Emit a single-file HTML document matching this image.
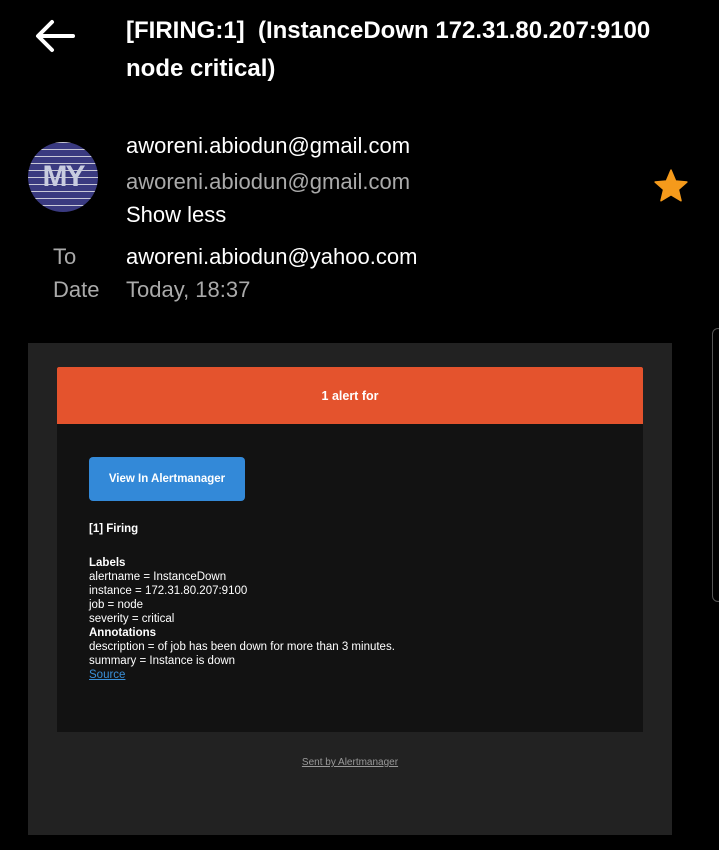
<!DOCTYPE html>
<html><head><meta charset="utf-8"><style>
body{margin:0;width:719px;height:850px;background:#000;position:relative;overflow:hidden;font-family:"Liberation Sans",sans-serif;color:#fff}
.a{position:absolute}
.t{font-size:24px;font-weight:bold;letter-spacing:0px;line-height:38px}
.h{font-size:22px;letter-spacing:0px;white-space:nowrap}
.s{font-size:11.5px;line-height:14px}
</style></head><body>
<svg class="a" style="left:34px;top:18px" width="42" height="36" viewBox="0 0 42 36"><path d="M39 18H5M18 4L4 18l14 14" stroke="#fff" stroke-width="4" fill="none" stroke-linecap="round" stroke-linejoin="round"/></svg>
<div class="a t" style="left:126px;top:12px;width:545px">[FIRING:1]&nbsp; (InstanceDown 172.31.80.207:9100 node critical)</div>
<div class="a" style="left:28px;top:142px;width:70px;height:70px;border-radius:50%;background:repeating-linear-gradient(0deg,#3a3a80 0 6px,#c8c8d8 6px 7px),#3a3a80;overflow:hidden"><div style="position:absolute;top:18px;left:0;width:70px;text-align:center;font-size:30px;font-weight:bold;color:#c8cce0;letter-spacing:-2px">MY</div></div>
<div class="a h" style="left:126px;top:133px">aworeni.abiodun@gmail.com</div>
<div class="a h" style="left:126px;top:169px;color:#aaa">aworeni.abiodun@gmail.com</div>
<div class="a h" style="left:126px;top:202px">Show less</div>
<svg class="a" style="left:651px;top:167px" width="40" height="38" viewBox="0 0 24 24"><path d="M12 2l2.9 6.9 7.1.6-5.4 4.7 1.7 7.1L12 17.5 5.7 21.3l1.7-7.1L2 9.5l7.1-.6z" fill="#f59a1b" stroke="#f59a1b" stroke-linejoin="round"/></svg>
<div class="a h" style="left:53px;top:244px;color:#aaa">To</div>
<div class="a h" style="left:126px;top:244px">aworeni.abiodun@yahoo.com</div>
<div class="a h" style="left:53px;top:277px;color:#aaa">Date</div>
<div class="a h" style="left:126px;top:277px;color:#aaa">Today, 18:37</div>
<div class="a" style="left:712px;top:328px;width:10px;height:272px;border:1px solid #555;border-radius:6px"></div>
<div class="a" style="left:28px;top:343px;width:644px;height:492px;background:#222"></div>
<div class="a" style="left:57px;top:367px;width:586px;height:365px;background:#121212"></div>
<div class="a" style="left:57px;top:367px;width:586px;height:57px;background:#e4532d;border-radius:2px 2px 0 0;text-align:center;line-height:58px;font-size:12.5px;font-weight:bold">1 alert for</div>
<div class="a" style="left:89px;top:457px;width:156px;height:44px;background:#3389d8;border-radius:4px;text-align:center;line-height:44px;font-size:11.5px;font-weight:bold">View In Alertmanager</div>
<div class="a s" style="left:89px;top:522px;font-weight:bold">[1] Firing</div>
<div class="a s" style="left:89px;top:556px"><b>Labels</b><br>alertname = InstanceDown<br>instance = 172.31.80.207:9100<br>job = node<br>severity = critical<br><b>Annotations</b><br>description = of job has been down for more than 3 minutes.<br>summary = Instance is down<br><span style="color:#3a8fd8;text-decoration:underline">Source</span></div>
<div class="a" style="left:28px;top:757px;width:644px;text-align:center;font-size:10px;color:#999;text-decoration:underline">Sent by Alertmanager</div>
</body></html>
